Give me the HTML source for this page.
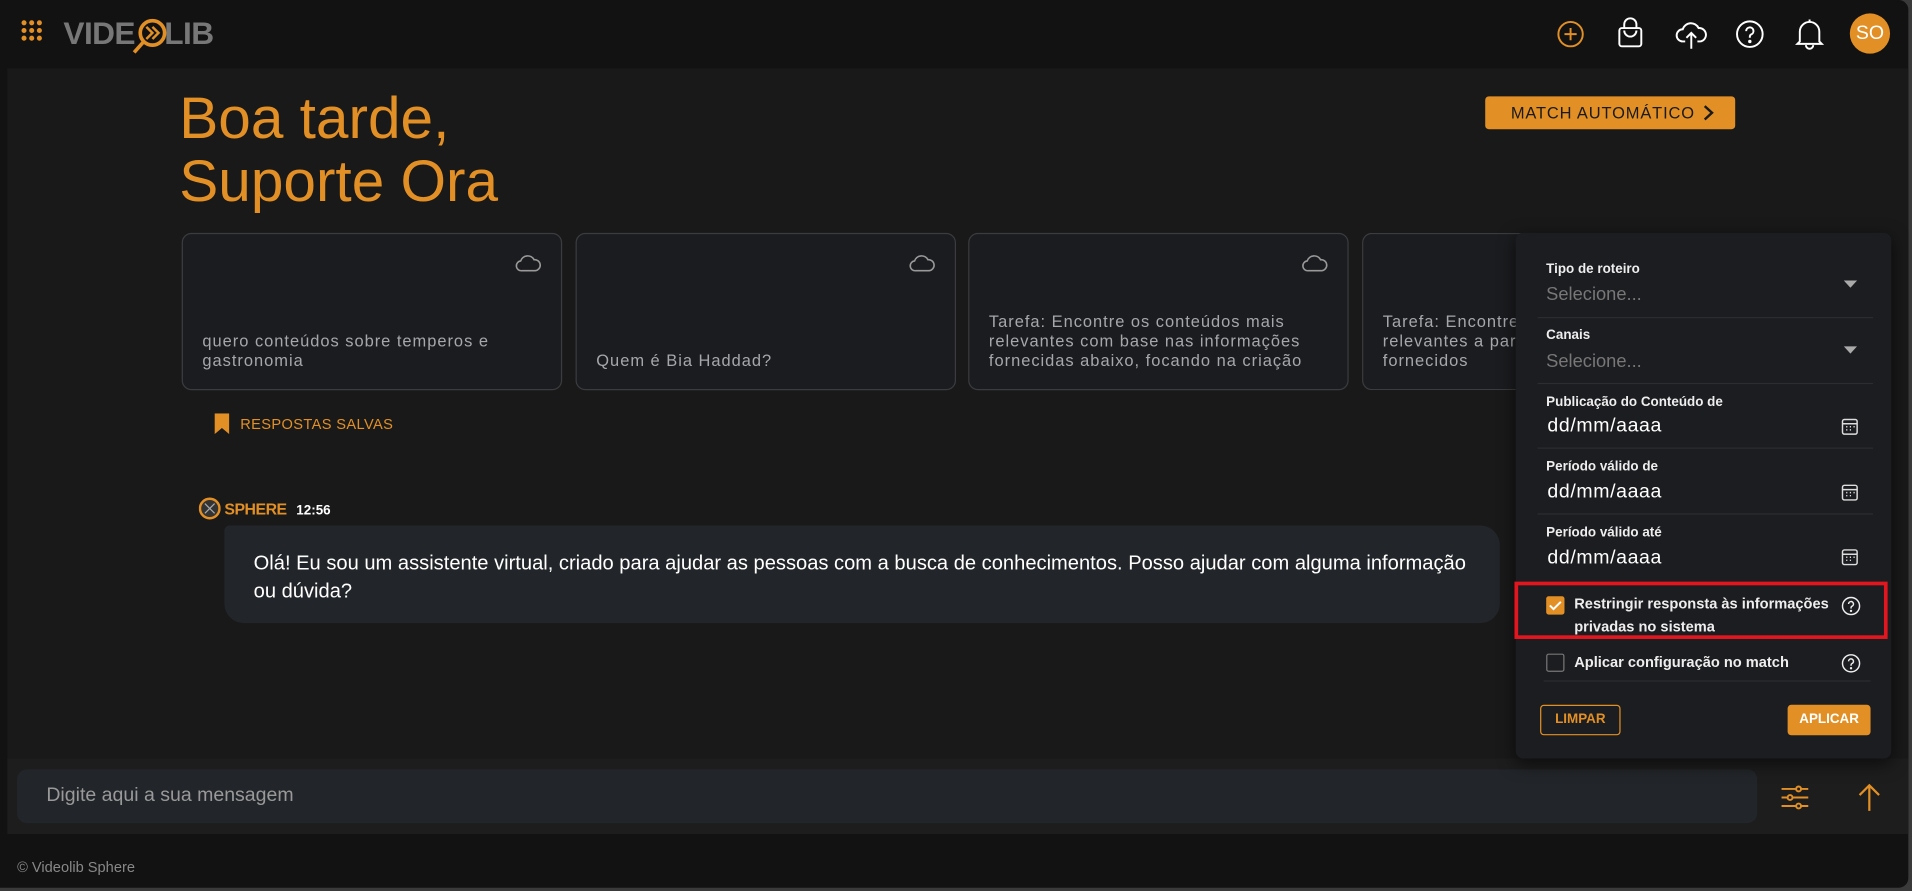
<!DOCTYPE html>
<html><head><meta charset="utf-8"><style>
*{box-sizing:border-box;margin:0;padding:0}
html,body{width:1912px;height:891px;overflow:hidden;background:#3a3a3a;font-family:"Liberation Sans",sans-serif}
#s{position:absolute;left:0;top:0;width:1568px;height:731px;transform:scale(1.21939);transform-origin:0 0}
.a{position:absolute}
.win{left:0;top:0;width:1565px;height:728px;background:#121212;border-radius:0 8px 8px 0}
.main{left:6px;top:56px;width:1559px;height:566px;background:#191919}
.card{top:191px;width:312px;height:129px;background:#1b1c1f;border:1px solid #3b3c3f;border-radius:8px;overflow:hidden}
.card p{position:absolute;left:16px;bottom:15px;right:16px;color:#a5a7ab;font-size:13.5px;letter-spacing:.8px;line-height:16px}
.card svg{position:absolute;right:16px;top:15px}
.lbl{left:1268px;color:#eee;font-size:11px;font-weight:bold}
.sel{left:1268px;color:#777;font-size:15px}
.date{left:1269px;color:#fff;font-size:16px;letter-spacing:.5px}
.sep{left:1261px;width:275px;height:1px;background:#2c2d31}
</style></head><body><div id="s">
<div class="a win"></div>
<div class="a main"></div>
<svg class="a" style="left:17px;top:16px" width="18" height="18" viewBox="0 0 20 20" fill="#e29026">
<circle cx="3" cy="3" r="2.3"/><circle cx="10" cy="3" r="2.3"/><circle cx="17" cy="3" r="2.3"/>
<circle cx="3" cy="10" r="2.3"/><circle cx="10" cy="10" r="2.3"/><circle cx="17" cy="10" r="2.3"/>
<circle cx="3" cy="17" r="2.3"/><circle cx="10" cy="17" r="2.3"/><circle cx="17" cy="17" r="2.3"/></svg>
<div class="a" style="left:52px;top:12px;color:#777;font-size:26px;font-weight:bold;letter-spacing:-.5px">VIDE<span style="display:inline-block;width:24px"></span>LIB</div>
<svg class="a" style="left:106px;top:13px" width="40" height="34" viewBox="0 0 40 34"><circle cx="19" cy="14" r="10" fill="none" stroke="#e29026" stroke-width="3"/><line x1="12" y1="21" x2="4" y2="30" stroke="#e29026" stroke-width="3"/><path d="M14 9l5 5-5 5M19 9l5 5-5 5" fill="none" stroke="#e29026" stroke-width="2"/></svg>
<svg class="a" style="left:1276px;top:16px" width="24" height="24" viewBox="0 0 24 24" fill="none" stroke="#e29026" stroke-width="1.6"><circle cx="12" cy="12" r="10"/><path d="M12 7v10M7 12h10"/></svg>
<svg class="a" style="left:1325px;top:14px" width="24" height="26" viewBox="0 0 24 26" fill="none" stroke="#fff" stroke-width="1.6"><rect x="3" y="9" width="18" height="15" rx="2"/><path d="M7 9V6a5 5 0 0 1 10 0v3M7 11a5 5 0 0 0 10 0"/></svg>
<svg class="a" style="left:1373px;top:15px" width="28" height="26" viewBox="0 0 28 26" fill="none" stroke="#fff" stroke-width="1.6"><path d="M9 19H7a5 5 0 0 1 0-10 7 7 0 0 1 13-1 5 5 0 0 1 1 11h-2"/><path d="M14 25V12M10 16l4-4 4 4"/></svg>
<svg class="a" style="left:1423px;top:16px" width="24" height="24" viewBox="0 0 24 24" fill="none" stroke="#fff" stroke-width="1.6"><circle cx="12" cy="12" r="10.5"/><path d="M9 9.5a3 3 0 1 1 4 2.8c-.8.4-1 1-1 2V15"/><circle cx="12" cy="18" r=".6" fill="#fff"/></svg>
<svg class="a" style="left:1472px;top:14px" width="24" height="28" viewBox="0 0 24 28" fill="none" stroke="#fff" stroke-width="1.6"><path d="M4 20V12a8 8 0 0 1 16 0v8l2 2H2z"/><path d="M9 23a3 3 0 0 0 6 0"/><path d="M12 2v2"/></svg>
<div class="a" style="left:1517px;top:11px;width:33px;height:33px;border-radius:50%;background:#e29026;color:#fff;font-size:16px;text-align:center;line-height:33px">SO</div>
<div class="a" style="left:147px;top:72px;color:#e29026;font-size:48px;line-height:52px">Boa tarde,<br>Suporte Ora</div>
<div class="a" style="left:1218px;top:79px;width:205px;height:27px;background:#e29026;border-radius:3px;color:#1a1a1a;font-size:13.5px;letter-spacing:.7px;line-height:27px;padding-left:21px">MATCH AUTOMÁTICO<svg style="position:absolute;left:178px;top:7px" width="10" height="13" viewBox="0 0 10 13"><path d="M2 1l6 5.5L2 12" fill="none" stroke="#1a1a1a" stroke-width="2"/></svg></div>
<div class="a card" style="left:149px"><svg width="22" height="16" viewBox="0 0 22 16" fill="none" stroke="#999" stroke-width="1.3"><path d="M6 15a4 4 0 0 1-1-8 6 6 0 0 1 11-1 4.5 4.5 0 0 1 1 9z"/></svg><p>quero conteúdos sobre temperos e gastronomia</p></div>
<div class="a card" style="left:472px"><svg width="22" height="16" viewBox="0 0 22 16" fill="none" stroke="#999" stroke-width="1.3"><path d="M6 15a4 4 0 0 1-1-8 6 6 0 0 1 11-1 4.5 4.5 0 0 1 1 9z"/></svg><p>Quem é Bia Haddad?</p></div>
<div class="a card" style="left:794px"><svg width="22" height="16" viewBox="0 0 22 16" fill="none" stroke="#999" stroke-width="1.3"><path d="M6 15a4 4 0 0 1-1-8 6 6 0 0 1 11-1 4.5 4.5 0 0 1 1 9z"/></svg><p style="top:64px;bottom:auto;height:48px;overflow:hidden">Tarefa: Encontre os conteúdos mais relevantes com base nas informações fornecidas abaixo, focando na criação d…</p></div>
<div class="a card" style="left:1117px;width:140px;border-right:none;border-radius:8px 0 0 8px"><p style="width:300px;right:auto">Tarefa: Encontre os conteúdos mais relevantes a partir de dados de entrada fornecidos</p></div>
<svg class="a" style="left:176px;top:339px" width="12" height="17" viewBox="0 0 12 17"><path d="M0 0h12v17l-6-5-6 5z" fill="#e29026"/></svg>
<div class="a" style="left:197px;top:341px;color:#e29026;font-size:12px;letter-spacing:.3px">RESPOSTAS SALVAS</div>
<svg class="a" style="left:163px;top:408px" width="18" height="18" viewBox="0 0 18 18"><circle cx="9" cy="9" r="8" fill="#333" stroke="#e29026" stroke-width="2"/><path d="M5 5l8 8M13 5l-8 8" stroke="#aaa" stroke-width="1"/></svg>
<div class="a" style="left:184px;top:410px;color:#e29026;font-size:13px;font-weight:bold;letter-spacing:-.4px">SPHERE</div>
<div class="a" style="left:243px;top:413px;color:#fff;font-size:11px;font-weight:bold">12:56</div>
<div class="a" style="left:184px;top:431px;width:1046px;height:80px;background:#222529;border-radius:4px 16px 16px 16px;color:#fff;font-size:16.5px;line-height:23px;padding:20px 24px">Olá! Eu sou um assistente virtual, criado para ajudar as pessoas com a busca de conhecimentos. Posso ajudar com alguma informação ou dúvida?</div>
<div class="a" style="left:6px;top:622px;width:1559px;height:62px;background:#1d1d1d"></div>
<div class="a" style="left:14px;top:631px;width:1427px;height:44px;background:#222529;border-radius:8px;color:#999;font-size:16px;line-height:44px;padding-left:24px">Digite aqui a sua mensagem</div>
<svg class="a" style="left:1461px;top:644px" width="22" height="20" viewBox="0 0 22 20" stroke="#e29026" stroke-width="1.6" fill="none"><path d="M0 3h22M0 10h22M0 17h22"/><circle cx="14" cy="3" r="2" fill="#1d1d1d"/><circle cx="7" cy="10" r="2" fill="#1d1d1d"/><circle cx="14" cy="17" r="2" fill="#1d1d1d"/></svg>
<svg class="a" style="left:1523px;top:642px" width="20" height="24" viewBox="0 0 20 24" stroke="#e29026" stroke-width="1.8" fill="none"><path d="M10 23V2M2 10l8-8 8 8"/></svg>
<div class="a" style="left:14px;top:704px;color:#888;font-size:12px">© Videolib Sphere</div>
<div class="a" style="left:1243px;top:191px;width:308px;height:431px;background:#1c1d20;border-radius:6px;box-shadow:0 4px 14px rgba(0,0,0,.6)"></div>
<div class="a lbl" style="top:215px">Tipo de roteiro</div><div class="a sel" style="top:233px">Selecione...</div>
<svg class="a" style="left:1512px;top:230px" width="11" height="6"><path d="M0 0h11L5.5 6z" fill="#aaa"/></svg>
<div class="a sep" style="top:260px"></div>
<div class="a lbl" style="top:269px">Canais</div><div class="a sel" style="top:288px">Selecione...</div>
<svg class="a" style="left:1512px;top:284px" width="11" height="6"><path d="M0 0h11L5.5 6z" fill="#aaa"/></svg>
<div class="a sep" style="top:314px"></div>
<div class="a lbl" style="top:324px">Publicação do Conteúdo de</div><div class="a date" style="top:341px">dd/mm/aaaa</div>
<div class="a sep" style="top:367px"></div>
<div class="a lbl" style="top:377px">Período válido de</div><div class="a date" style="top:395px">dd/mm/aaaa</div>
<div class="a sep" style="top:421px"></div>
<div class="a lbl" style="top:431px">Período válido até</div><div class="a date" style="top:449px">dd/mm/aaaa</div>
<svg class="a" style="left:1510px;top:343px" width="14" height="14" viewBox="0 0 14 14" fill="none" stroke="#ddd" stroke-width="1.2"><rect x="1" y="1" width="12" height="12" rx="1.5"/><path d="M1 4.5h12M4 7h1M7 7h1M10 7h1M4 9.5h1M7 9.5h1"/></svg>
<svg class="a" style="left:1510px;top:397px" width="14" height="14" viewBox="0 0 14 14" fill="none" stroke="#ddd" stroke-width="1.2"><rect x="1" y="1" width="12" height="12" rx="1.5"/><path d="M1 4.5h12M4 7h1M7 7h1M10 7h1M4 9.5h1M7 9.5h1"/></svg>
<svg class="a" style="left:1510px;top:450px" width="14" height="14" viewBox="0 0 14 14" fill="none" stroke="#ddd" stroke-width="1.2"><rect x="1" y="1" width="12" height="12" rx="1.5"/><path d="M1 4.5h12M4 7h1M7 7h1M10 7h1M4 9.5h1M7 9.5h1"/></svg>
<div class="a" style="left:1242px;top:477px;width:306px;height:47px;border:3px solid #e3161f"></div>
<div class="a" style="left:1268px;top:489px;width:15px;height:15px;background:#e29026;border-radius:2px"><svg width="15" height="15"><path d="M3 7.5l3 3 6-6" fill="none" stroke="#fff" stroke-width="1.6"/></svg></div>
<div class="a" style="left:1291px;top:486px;color:#eee;font-size:12px;font-weight:bold;line-height:19px">Restringir responsta às informações<br>privadas no sistema</div>
<svg class="a" style="left:1510px;top:489px" width="16" height="16" viewBox="0 0 24 24" fill="none" stroke="#eee" stroke-width="1.8"><circle cx="12" cy="12" r="10.5"/><path d="M9 9.5a3 3 0 1 1 4 2.8c-.8.4-1 1-1 2V15"/><circle cx="12" cy="18" r=".6" fill="#eee"/></svg>
<div class="a" style="left:1268px;top:536px;width:15px;height:15px;border:1.6px solid #777;border-radius:2px"></div>
<div class="a" style="left:1291px;top:536px;color:#eee;font-size:12px;font-weight:bold">Aplicar configuração no match</div>
<svg class="a" style="left:1510px;top:536px" width="16" height="16" viewBox="0 0 24 24" fill="none" stroke="#eee" stroke-width="1.8"><circle cx="12" cy="12" r="10.5"/><path d="M9 9.5a3 3 0 1 1 4 2.8c-.8.4-1 1-1 2V15"/><circle cx="12" cy="18" r=".6" fill="#eee"/></svg>
<div class="a sep" style="top:558px;left:1266px;width:268px"></div>
<div class="a" style="left:1263px;top:578px;width:66px;height:25px;border:1.5px solid #e29026;border-radius:3px;color:#e29026;font-size:11px;font-weight:bold;text-align:center;line-height:22px">LIMPAR</div>
<div class="a" style="left:1466px;top:578px;width:68px;height:25px;background:#e29026;border-radius:3px;color:#fff;font-size:11px;font-weight:bold;text-align:center;line-height:25px">APLICAR</div>
</div></body></html>
